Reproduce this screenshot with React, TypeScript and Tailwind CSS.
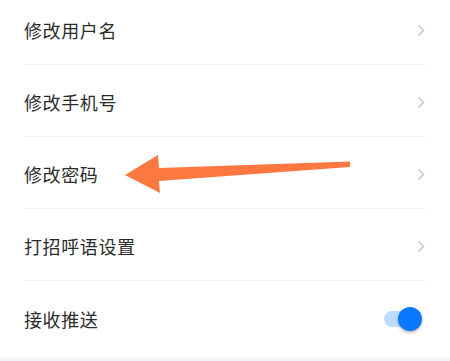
import React from 'react';

const items = ['修改用户名', '修改手机号', '修改密码', '打招呼语设置'];

const Chevron = () => (
  <svg width="8" height="13" viewBox="0 0 8 13" fill="none">
    <path d="M1.5 1.5L6.5 6.5L1.5 11.5" stroke="#c4c4c4" strokeWidth="1.4" />
  </svg>
);

const Row: React.FC<{ label: string; last?: boolean; children?: React.ReactNode }> = ({ label, last, children }) => (
  <div className={`mx-6 flex h-[72px] items-center justify-between pt-[4px] ${last ? '' : 'border-b border-[#f4f4f4]'}`}>
    <span className="text-[18px] tracking-[0.6px] text-[#2b2b2b]">{label}</span>
    {children}
  </div>
);

export default function App() {
  return (
    <div
      className="relative h-[361px] w-[450px] overflow-hidden bg-white"
      style={{ fontFamily: '"Noto Sans CJK SC", "Noto Sans", sans-serif' }}
    >
      <div className="-mt-[7px]">
        {items.map((label) => (
          <Row key={label} label={label}>
            <span className="mr-[1px]">
              <Chevron />
            </span>
          </Row>
        ))}
        <Row label="接收推送" last>
          <div className="relative mr-[4px] h-[24px] w-[38px]">
            <div className="absolute left-0 top-[4px] h-[16px] w-[34px] rounded-full bg-[#bedcff]" />
            <div className="absolute right-0 top-0 h-[24px] w-[24px] rounded-full bg-[#0a78ff] shadow-[0_2px_3px_rgba(0,0,0,0.25)]" />
          </div>
        </Row>
      </div>
      <div className="absolute bottom-0 left-0 h-[4px] w-full bg-[#f4f5f8]" />
      <svg className="absolute left-0 top-0" width="450" height="361" viewBox="0 0 450 361">
        <polygon
          points="125,175 158,155 159,168 350,161.5 350,167 159,181 160,193"
          fill="#fd7840"
        />
      </svg>
    </div>
  );
}
